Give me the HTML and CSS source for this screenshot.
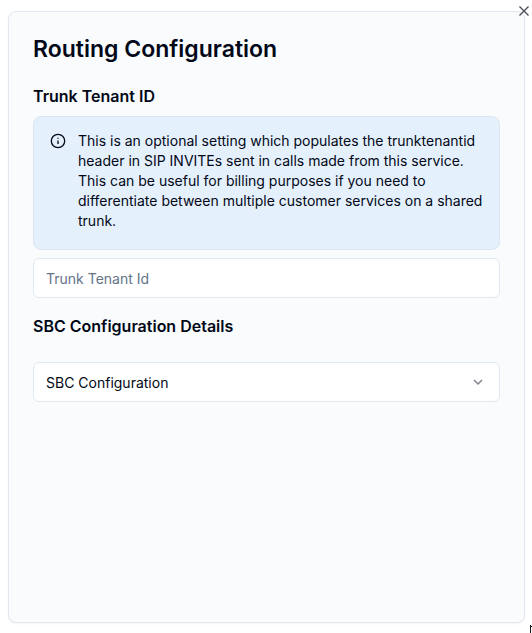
FILE: index.html
```html
<!DOCTYPE html>
<html lang="en">
<head>
<meta charset="utf-8">
<meta name="viewport" content="width=device-width, initial-scale=1">
<title>Routing Configuration</title>
<link rel="stylesheet" href="styles.css">
</head>
<body>
<main class="card">
  <h1 class="card-title">Routing Configuration</h1>
  <section class="group">
    <h2 class="group-title"><label for="tenant">Trunk Tenant ID</label></h2>
    <div class="alert" role="note">
      <svg class="alert-icon" viewBox="0 0 16 16" aria-hidden="true"><circle cx="8" cy="8" r="6.7"/><path d="M8 7.4V11M8 4.8V5.8"/></svg>
      <p class="alert-text">This is an optional setting which populates the trunktenantid header in SIP INVITEs sent in calls made from this service. This can be useful for billing purposes if you need to differentiate between multiple customer services on a shared trunk.</p>
    </div>
    <input class="field" id="tenant" type="text" placeholder="Trunk Tenant Id">
  </section>
  <section class="group">
    <h2 class="group-title"><label for="sbc">SBC Configuration Details</label></h2>
    <div class="select-wrap">
      <select class="field select" id="sbc"><option>SBC Configuration</option></select>
      <svg class="chevron" viewBox="0 0 16 16" aria-hidden="true"><path d="M4 6L8 10L12 6"/></svg>
    </div>
  </section>
</main>
<button class="close" type="button" aria-label="Close"><svg class="close-icon" viewBox="0 0 12 12" aria-hidden="true"><path d="M1.5 1.5L10.5 10.5M10.5 1.5L1.5 10.5"/></svg></button>
<svg class="corner" viewBox="0 0 2 8" aria-hidden="true"><path d="M0 0H1V1H2V2H1V8H0Z"/></svg>
</body>
</html>
```
FILE: styles.css
```css
* { box-sizing: border-box; }
body {
  margin: 0;
  min-height: 100vh;
  padding: 11px 7px 10px 8px;
  display: flex;
  background: #fff;
  color: #020817;
  font-family: Inter, "Liberation Sans", sans-serif;
  font-size: 14px;
  line-height: 20px;
}
h1, h2, p { margin: 0; }
.card {
  flex: 1;
  min-width: 0;
  padding: 24px;
  border: 1px solid #e2e8f0;
  border-radius: 8px;
  background: #f9fbfd;
  box-shadow: 0 1px 2px rgba(0, 0, 0, 0.05);
}
.card-title {
  margin-bottom: 22px;
  font-size: 23px;
  line-height: 26px;
  font-weight: 600;
}
.group + .group { margin-top: 16px; }
.group-title {
  margin-bottom: 8px;
  font-size: 16px;
  line-height: 24px;
  font-weight: 600;
}
.alert {
  display: flex;
  gap: 12px;
  margin-bottom: 8px;
  padding: 14px 16px 18px;
  border: 1px solid #dce6f2;
  border-radius: 8px;
  background: #e5f0fd;
}
.alert-icon {
  flex: none;
  width: 16px;
  height: 16px;
  margin-top: 2px;
  fill: none;
  stroke: currentColor;
  stroke-width: 1.3;
}
.field {
  display: block;
  width: 100%;
  height: 40px;
  padding: 0 12px;
  border: 1px solid #e2e8f0;
  border-radius: 6px;
  background: #fff;
  color: inherit;
  font: inherit;
}
.field::placeholder { color: #64748b; opacity: 1; }
.select-wrap { position: relative; margin-top: 24px; }
.select { appearance: none; padding-top: 2px; }
.chevron {
  position: absolute;
  right: 14px;
  top: 12px;
  width: 16px;
  height: 16px;
  fill: none;
  stroke: #80838b;
  stroke-width: 1.5;
  pointer-events: none;
}
.close {
  position: absolute;
  top: 5px;
  right: 2px;
  padding: 0;
  border: 0;
  background: none;
}
.close-icon { display: block; width: 12px; height: 12px; stroke: #4b4e5b; stroke-width: 1.4; }
.corner { position: absolute; right: 0; bottom: 0; width: 2px; height: 8px; fill: #15151c; }
```
